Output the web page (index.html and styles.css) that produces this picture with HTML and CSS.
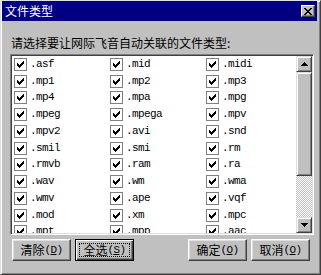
FILE: index.html
```html
<!DOCTYPE html>
<html>
<head>
<meta charset="utf-8">
<link rel="stylesheet" href="styles.css">
</head>
<body>
<div class="dialog">
  <div class="titlebar">
    <span class="title">文件类型</span>
    <span class="close"><svg width="8" height="7" viewBox="0 0 8 7"><path d="M0 0h2v1h1v1h2v-1h1v-1h2v1h-1v1h-1v1h-1v1h1v1h1v1h1v1h-2v-1h-1v-1h-2v1h-1v1h-2v-1h1v-1h1v-1h1v-1h-1v-1h-1v-1h-1z" fill="#000"/></svg></span>
  </div>
  <div class="body">
    <div class="label">请选择要让网际飞音自动关联的文件类型:</div>
    <div class="listbox">
      <div class="items" id="items"></div>
      <div class="scrollbar">
        <div class="sb-btn"><svg width="7" height="4" viewBox="0 0 7 4"><path d="M3 0h1v1h1v1h1v1h1v1h-7v-1h1v-1h1v-1h1z" fill="#000"/></svg></div>
        <div class="thumb"></div>
        <div class="track"></div>
        <div class="sb-btn"><svg width="7" height="4" viewBox="0 0 7 4"><path d="M0 0h7v1h-1v1h-1v1h-1v1h-1v-1h-1v-1h-1v-1h-1z" fill="#000"/></svg></div>
      </div>
    </div>
    <div class="buttons">
      <div class="group">
        <div class="btn">清除<span class="mn">(<u>D</u>)</span></div>
        <div class="btn focused">全选<span class="mn">(<u>S</u>)</span></div>
      </div>
      <div class="group">
        <div class="btn">确定<span class="mn">(<u>O</u>)</span></div>
        <div class="btn">取消<span class="mn">(<u>O</u>)</span></div>
      </div>
    </div>
  </div>
</div>
<script src="script.js"></script>
</body>
</html>
```

FILE: script.js
```js
var exts = ["asf","mid","midi","mp1","mp2","mp3","mp4","mpa","mpg","mpeg","mpega","mpv","mpv2","avi","snd","smil","smi","rm","rmvb","ram","ra","wav","wm","wma","wmv","ape","vqf","mod","xm","mpc","mpt","mpp","aac"];
var box = document.getElementById("items");
var check = '<svg class="cb" width="13" height="13" viewBox="0 0 13 13"><rect x="0.5" y="0.5" width="12" height="12" fill="#fff" stroke="#808080"/><path d="M3 5h1v1h1v1h1v-1h1v-1h1v-1h1v-1h1v3h-1v1h-1v1h-1v1h-1v1h-1v-1h-1v-1h-1z" fill="#000"/></svg>';
exts.forEach(function (e) {
  var d = document.createElement("div");
  d.className = "item";
  d.innerHTML = check + '<span class="ext">.' + e + '</span>';
  box.appendChild(d);
});
```

FILE: styles.css
```css
html, body {
  margin: 0;
  padding: 0;
  background: #c0c0c0;
}
.dialog {
  width: 321px;
  height: 275px;
  box-sizing: border-box;
  background: #c0c0c0;
  border: 1px solid;
  border-color: #dfdfdf #404040 #404040 #dfdfdf;
  box-shadow: inset 1px 1px #fff, inset -1px -1px #808080;
  padding: 0 3px 2px 1px;
  display: flex;
  flex-direction: column;
  font-family: "Noto Sans CJK SC", sans-serif;
  font-size: 12px;
  color: #000;
}
.titlebar {
  height: 20px;
  background: #000080;
  color: #fff;
  display: flex;
  align-items: center;
  justify-content: space-between;
  padding: 0 2px 0 3px;
}
.title {
  font-size: 12px;
  line-height: 14px;
}
.close {
  width: 14px;
  height: 12px;
  box-sizing: border-box;
  background: #c0c0c0;
  border: 1px solid;
  border-color: #fff #404040 #404040 #fff;
  box-shadow: inset -1px -1px #808080;
  display: flex;
  align-items: center;
  justify-content: center;
}
.close svg { display: block; }
.body {
  padding: 15px 0 0 8px;
  display: flex;
  flex-direction: column;
}
.label {
  padding-left: 1px;
  line-height: 14px;
  height: 14px;
}
.listbox {
  margin-top: 4px;
  width: 304px;
  height: 181px;
  box-sizing: border-box;
  border: 1px solid;
  border-color: #808080 #fff #fff #808080;
  box-shadow: inset 1px 1px #404040, inset -1px -1px #dfdfdf;
  padding: 1px;
  background: #fff;
  display: flex;
}
.items {
  flex: 1;
  display: grid;
  grid-template-columns: 96px 96px 96px;
  grid-auto-rows: 16.75px;
  padding-left: 2px;
  overflow: hidden;
  align-content: start;
}
.item {
  display: flex;
  align-items: center;
}
.cb { display: block; flex: none; }
.ext {
  margin-left: 3px;
  font-family: "Liberation Mono", monospace;
  font-size: 11px;
  letter-spacing: -0.6px;
  line-height: 13px;
}
.scrollbar {
  width: 16px;
  display: flex;
  flex-direction: column;
}
.sb-btn, .thumb {
  box-sizing: border-box;
  background: #c0c0c0;
  border: 1px solid;
  border-color: #dfdfdf #404040 #404040 #dfdfdf;
  box-shadow: inset 1px 1px #fff, inset -1px -1px #808080;
}
.sb-btn {
  height: 16px;
  display: flex;
  align-items: center;
  justify-content: center;
}
.sb-btn svg { display: block; }
.thumb { height: 104px; }
.track {
  flex: 1;
  background: repeating-conic-gradient(#c0c0c0 0 25%, #fff 0 50%) 0 0 / 2px 2px;
}
.buttons {
  margin-top: 4px;
  margin-left: 2px;
  width: 298px;
  display: flex;
  justify-content: space-between;
}
.group {
  display: flex;
  gap: 4px;
}
.btn {
  position: relative;
  width: 59px;
  height: 22px;
  box-sizing: border-box;
  border: 1px solid;
  border-color: #fff #404040 #404040 #fff;
  box-shadow: inset -1px -1px #808080, inset 1px 1px #dfdfdf;
  display: flex;
  align-items: center;
  justify-content: center;
  line-height: 14px;
}
.btn.focused {
  border-color: #000;
  box-shadow: inset 1px 1px #fff, inset -1px -1px #404040, inset -2px -2px #808080;
}
.btn.focused::after {
  content: "";
  position: absolute;
  left: 3px;
  top: 3px;
  right: 3px;
  bottom: 3px;
  border: 1px dotted #000;
}
.mn {
  font-family: "Liberation Mono", monospace;
  font-size: 11px;
  letter-spacing: -0.6px;
}
.mn u { text-underline-offset: 1px; }
```
